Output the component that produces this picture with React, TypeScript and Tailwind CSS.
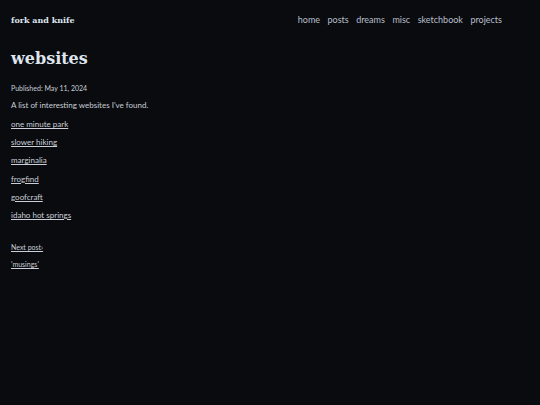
export default function App() {
  const links = [
    "one minute park",
    "slower hiking",
    "marginalia",
    "frogfind",
    "goofcraft",
    "idaho hot springs",
  ];
  const nav = ["home", "posts", "dreams", "misc", "sketchbook", "projects"];

  return (
    <div className="min-h-screen bg-[#0a0b0e] text-[#c9ced8] font-['Lato',sans-serif]">
      <header className="flex items-center justify-between pl-[11px] pr-[38px] pt-[14px]">
        <a className="font-['DejaVu_Serif',serif] text-[8px] leading-[12px] font-bold text-[#dfe5ef]">fork and knife</a>
        <nav className="flex gap-[7.5px] text-[9px] leading-[12px] text-[#b7bfcc]">
          {nav.map((item) => (
            <a key={item}>{item}</a>
          ))}
        </nav>
      </header>

      <main className="px-[11px]">
        <h1 className="mt-[21px] font-['DejaVu_Serif',serif] text-[16px] leading-[24px] font-bold text-[#dfe5ef]">websites</h1>
        <p className="mt-[12px] text-[7px] leading-[10px]">Published: May 11, 2024</p>
        <p className="mt-[6px] text-[8px] leading-[12px]">A list of interesting websites I've found.</p>
        <ul className="mt-[7px] flex flex-col gap-[6.2px] text-[8px] leading-[12px]">
          {links.map((l) => (
            <li key={l}>
              <a className="underline">{l}</a>
            </li>
          ))}
        </ul>
        <div className="mt-[21px] flex flex-col gap-[7px] text-[7px] leading-[10px]">
          <a className="underline">Next post›</a>
          <a className="underline">'musings'</a>
        </div>
      </main>
    </div>
  );
}
